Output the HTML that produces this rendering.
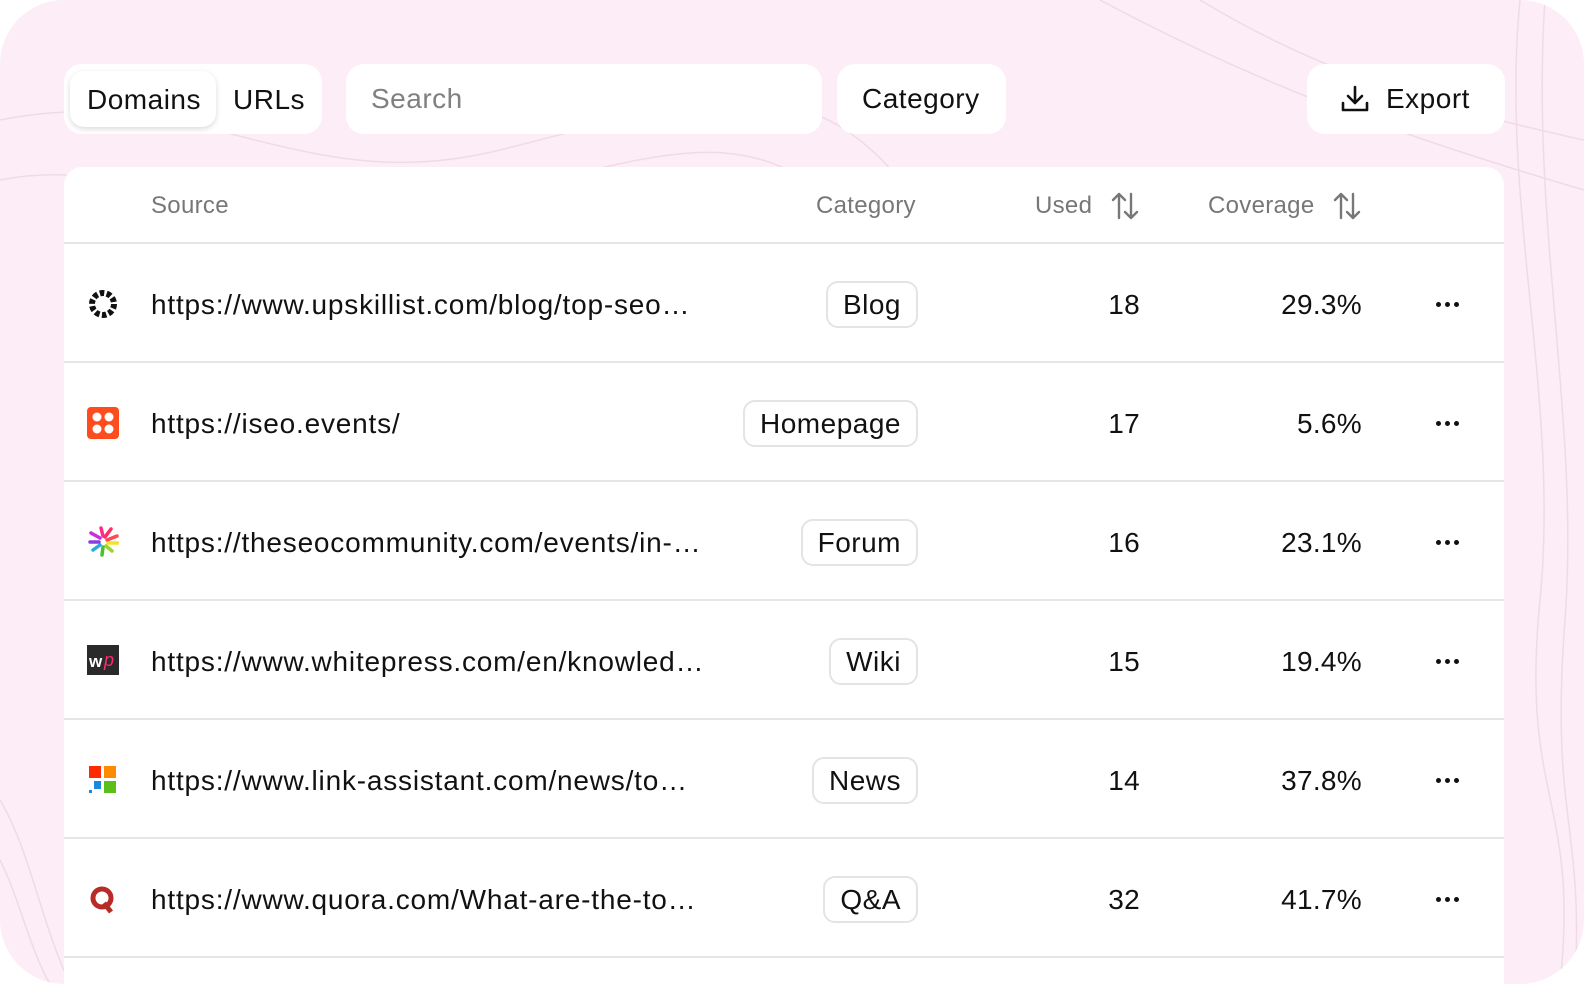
<!DOCTYPE html>
<html><head><meta charset="utf-8"><style>
*{box-sizing:border-box;margin:0;padding:0}
html,body{width:1584px;height:984px;background:#fff;overflow:hidden}
body{font-family:"Liberation Sans",sans-serif;color:#111;position:relative}
.bg{position:absolute;left:0;top:0;width:1584px;height:984px;background:#fdedf6;border-radius:64px;overflow:hidden}
.pill{position:absolute;background:#fff;border-radius:18px;height:70px;top:64px;display:flex;align-items:center;font-size:28px;letter-spacing:0.5px}
.card{position:absolute;left:64px;top:167px;width:1440px;height:817px;background:#fff;border-radius:18px 18px 0 0;overflow:hidden}
.hdr{position:absolute;top:0;height:77px;left:0;right:0;border-bottom:2px solid #e6e6e6;font-size:24px;letter-spacing:0.3px;color:#777}
.hdr span{position:absolute;top:25px}
.row{position:absolute;left:0;right:0;height:119px;border-bottom:2px solid #e6e6e6;font-size:28px;letter-spacing:0.8px}
.row>*{position:absolute}
.url{left:87px;top:45px}
.badge{top:37px;right:586px;height:47px;border:2px solid #e4e4e4;border-radius:12px;padding:0 15px;line-height:43px;letter-spacing:0.5px}
.used{right:364px;top:45px;letter-spacing:0.3px}
.cov{right:142px;top:45px;letter-spacing:0.3px}
.dots{left:1372px;top:58px;display:flex;gap:4px}
.dots i{width:5px;height:5px;background:#111;border-radius:50%}
.ic{left:23px;top:44px;width:32px;height:32px}
</style></head><body>
<div class="bg">
<svg width="1584" height="984" style="position:absolute;left:0;top:0" fill="none" stroke="#eedbe6" stroke-width="1.5">
<path d="M0 120 C200 80 300 200 500 150 S800 60 900 180"/>
<path d="M0 180 C150 150 260 260 480 200 S760 120 880 240"/>
<path d="M1520 0 C1500 200 1560 400 1540 600 S1580 800 1560 984"/>
<path d="M1545 0 C1530 220 1580 420 1565 620 S1584 820 1575 984"/>
<path d="M0 800 C30 850 40 920 70 984"/>
<path d="M0 860 C20 900 30 950 50 984"/>
<path d="M1200 0 C1300 60 1400 100 1584 140"/>
<path d="M1100 0 C1250 80 1380 130 1584 190"/>
</svg>
</div>
<div class="pill" style="left:64px;width:258px">
 <div style="position:absolute;left:6px;top:7px;width:146px;height:56px;background:#fff;border-radius:14px;box-shadow:0 2px 6px rgba(0,0,0,.15)"></div>
 <span style="position:absolute;left:23px;top:20px">Domains</span>
 <span style="position:absolute;left:169px;top:20px">URLs</span>
</div>
<div class="pill" style="left:346px;width:476px;color:#808080;padding-left:25px">Search</div>
<div class="pill" style="left:837px;width:169px;padding-left:25px">Category</div>
<div class="pill" style="left:1307px;width:198px;padding-left:33px">
<svg width="30" height="30" viewBox="0 0 30 30" fill="none" stroke="#111" stroke-width="2.6" stroke-linecap="round" stroke-linejoin="round"><path d="M15 3v16M8 12l7 7 7-7M3 19v7h24v-7"/></svg>
<span style="margin-left:16px">Export</span></div>
<div class="card">
 <div class="hdr"><span style="left:87px">Source</span><span style="left:752px">Category</span><span style="left:971px">Used</span><span style="left:1144px">Coverage</span>
 <svg style="position:absolute;left:1046px;top:24px" width="30" height="30" viewBox="0 0 30 30" fill="none" stroke="#777" stroke-width="2.4" stroke-linecap="round" stroke-linejoin="round"><path d="M9 27V3M3 9l6-6 6 6M21 3v24M15 21l6 6 6-6"/></svg>
 <svg style="position:absolute;left:1268px;top:24px" width="30" height="30" viewBox="0 0 30 30" fill="none" stroke="#777" stroke-width="2.4" stroke-linecap="round" stroke-linejoin="round"><path d="M9 27V3M3 9l6-6 6 6M21 3v24M15 21l6 6 6-6"/></svg>
 </div>
 <div class="row" style="top:77px">
  <svg class="ic" viewBox="0 0 32 32"><circle cx="16" cy="16" r="11" fill="none" stroke="#111" stroke-width="6" stroke-dasharray="4.5 2.4"/></svg>
  <span class="url">https://www.upskillist.com/blog/top-seo…</span><span class="badge">Blog</span><span class="used">18</span><span class="cov">29.3%</span><div class="dots"><i></i><i></i><i></i></div></div>
 <div class="row" style="top:196px">
  <svg class="ic" viewBox="0 0 32 32"><rect x="0" y="0" width="32" height="32" rx="4" fill="#ff4c1f"/><circle cx="10" cy="10" r="4.5" fill="#fff"/><circle cx="22" cy="10" r="4.5" fill="#fff"/><circle cx="10" cy="22" r="4.5" fill="#fff"/><circle cx="22" cy="22" r="4.5" fill="#fff"/></svg>
  <span class="url">https://iseo.events/</span><span class="badge">Homepage</span><span class="used">17</span><span class="cov">5.6%</span><div class="dots"><i></i><i></i><i></i></div></div>
 <div class="row" style="top:315px">
  <svg class="ic" viewBox="0 0 32 32" stroke-width="3.5" stroke-linecap="round"><path d="M13 12L4 7" stroke="#c62fe0"/><path d="M16 10l-2-8" stroke="#ff2d8a"/><path d="M18 11l6-8" stroke="#ff2d6a"/><path d="M20 14l10-4" stroke="#ff4b4b"/><path d="M21 17h10" stroke="#f5e12b"/><path d="M19 20l6 5" stroke="#9ad62a"/><path d="M16 21l-1 8" stroke="#4cbf2a"/><path d="M13 19l-7 5" stroke="#2aa8e0"/><path d="M12 16H3" stroke="#8a3de0"/></svg>
  <span class="url">https://theseocommunity.com/events/in-…</span><span class="badge">Forum</span><span class="used">16</span><span class="cov">23.1%</span><div class="dots"><i></i><i></i><i></i></div></div>
 <div class="row" style="top:434px">
  <svg class="ic" viewBox="0 0 32 32"><rect y="0" width="32" height="30" fill="#2a2a2a"/><text x="2" y="22" font-family="Liberation Sans" font-weight="bold" font-size="17" fill="#fff">w</text><text x="17" y="21" font-family="Liberation Sans" font-style="italic" font-size="18" fill="#ff2a6d">p</text></svg>
  <span class="url">https://www.whitepress.com/en/knowled…</span><span class="badge">Wiki</span><span class="used">15</span><span class="cov">19.4%</span><div class="dots"><i></i><i></i><i></i></div></div>
 <div class="row" style="top:553px">
  <svg class="ic" viewBox="0 0 32 32"><rect x="2" y="2" width="12" height="12" fill="#ff2a00"/><rect x="17" y="2" width="12" height="12" fill="#ff8a00"/><rect x="7" y="17" width="7" height="8" fill="#1a8ae0"/><rect x="2" y="26" width="3" height="3" fill="#1a8ae0"/><rect x="17" y="17" width="12" height="12" fill="#5bbf1a"/></svg>
  <span class="url">https://www.link-assistant.com/news/to…</span><span class="badge">News</span><span class="used">14</span><span class="cov">37.8%</span><div class="dots"><i></i><i></i><i></i></div></div>
 <div class="row" style="top:672px">
  <svg class="ic" viewBox="0 0 32 32"><circle cx="15" cy="15" r="9" fill="none" stroke="#b92b27" stroke-width="5"/><path d="M17 20l7 9" stroke="#b92b27" stroke-width="5"/></svg>
  <span class="url">https://www.quora.com/What-are-the-to…</span><span class="badge">Q&amp;A</span><span class="used">32</span><span class="cov">41.7%</span><div class="dots"><i></i><i></i><i></i></div></div>
</div>
</body></html>
